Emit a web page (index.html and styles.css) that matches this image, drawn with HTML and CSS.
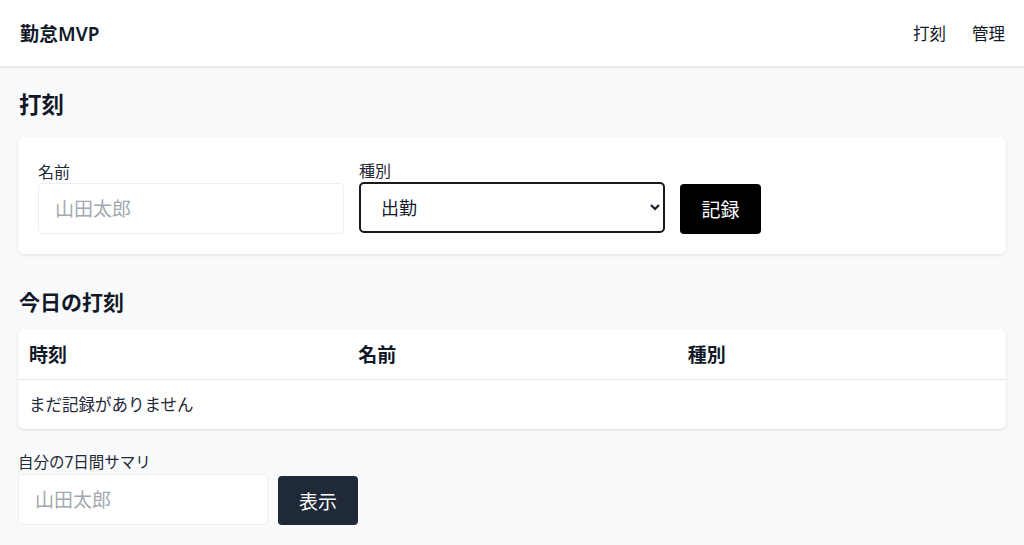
FILE: index.html
```html
<!DOCTYPE html>
<html lang="ja">

<head>
  <meta charset="UTF-8">
  <meta name="viewport" content="width=device-width, initial-scale=1.0">
  <title>勤怠MVP</title>
  <link rel="stylesheet" href="styles.css">
</head>

<body>
  <header class="topbar">
    <div class="brand">勤怠MVP</div>
    <nav class="nav">
      <a href="#">打刻</a>
      <a href="#">管理</a>
    </nav>
  </header>

  <main class="main">
    <h2 class="title">打刻</h2>
    <form class="card punch-form">
      <div class="field name-field">
        <label class="label">名前</label>
        <input class="input" type="text" placeholder="山田太郎">
      </div>
      <div class="field type-field">
        <label class="label">種別</label>
        <select class="select">
          <option>出勤</option>
          <option>退勤</option>
        </select>
      </div>
      <button type="button" class="btn btn-black">記録</button>
    </form>

    <h2 class="title sub">今日の打刻</h2>
    <div class="card">
      <table class="log">
        <thead>
          <tr>
            <th>時刻</th>
            <th>名前</th>
            <th>種別</th>
          </tr>
        </thead>
        <tbody>
          <tr>
            <td colspan="3">まだ記録がありません</td>
          </tr>
        </tbody>
      </table>
    </div>

    <div class="summary">
      <label class="label">自分の7日間サマリ</label>
      <div class="summary-row">
        <input class="input summary-input" type="text" placeholder="山田太郎">
        <button type="button" class="btn btn-dark">表示</button>
      </div>
    </div>
  </main>
</body>

</html>
```

FILE: styles.css
```css
* {
  box-sizing: border-box;
}

body {
  margin: 0;
  font-family: "Noto Sans", "Noto Sans CJK JP", sans-serif;
  color: #111827;
  background-color: #f9fafb;
}

.topbar {
  height: 66px;
  padding: 0 19px 0 20px;
  display: flex;
  align-items: center;
  justify-content: space-between;
  background: #fff;
  box-shadow: 0 1px 3px rgba(0, 0, 0, 0.12);
}

.brand {
  font-size: 19px;
  font-weight: 600;
}

.nav {
  display: flex;
  gap: 26px;
}

.nav a {
  color: #111827;
  text-decoration: none;
  font-size: 16.5px;
}

.main {
  padding: 24px 18px;
}

.title {
  margin: 0 0 17px 1px;
  font-size: 22.5px;
  line-height: 30px;
  font-weight: 700;
}

.title.sub {
  margin: 33px 0 12px 1px;
  font-size: 21px;
}

.card {
  background: #fff;
  border-radius: 6px;
  box-shadow: 0 1px 3px rgba(0, 0, 0, 0.12);
}

.punch-form {
  display: flex;
  align-items: flex-end;
  gap: 15px;
  padding: 23px 20px 20px 20px;
}

.field {
  display: flex;
  flex-direction: column;
}

.label {
  font-size: 16px;
  color: #1f2937;
  line-height: 22px;
}

.input {
  width: 306px;
  height: 51px;
  padding: 0 16px;
  border: 1px solid #eceef1;
  border-radius: 4px;
  background: #fff;
  font-family: inherit;
  font-size: 19px;
  color: #111827;
}

.input::placeholder {
  color: #a3a8b0;
}

.select {
  width: 306px;
  height: 51px;
  margin-bottom: 1px;
  padding: 0 16px;
  border: 2px solid #1a1a1a;
  border-radius: 5px;
  background: #fff;
  font-family: inherit;
  font-size: 18px;
  color: #111827;
}

.btn {
  height: 50px;
  width: 81px;
  border: none;
  border-radius: 4px;
  color: #fff;
  font-family: inherit;
  font-size: 19px;
}

.btn-black {
  background: #000;
}

.btn-dark {
  height: 49px;
  width: 80px;
  background: #1f2937;
}

.log {
  width: 100%;
  border-collapse: collapse;
  table-layout: fixed;
}

.log th,
.log td {
  height: 50px;
  padding: 0 11px;
  text-align: left;
}

.log th {
  font-size: 19px;
  font-weight: 700;
  border-bottom: 1px solid #e5e7eb;
}

.log td {
  font-size: 16.5px;
  color: #1f2937;
}

.summary {
  margin-top: 22px;
}

.summary .label {
  display: block;
  font-size: 15.5px;
  margin-bottom: 1px;
}

.summary-row {
  display: flex;
  align-items: flex-end;
  gap: 10px;
}

.summary-input {
  width: 250px;
}
```
